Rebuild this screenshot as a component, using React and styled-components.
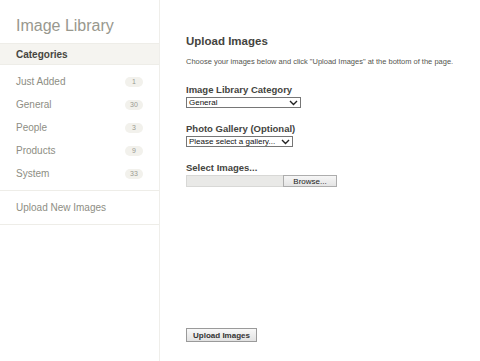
import styled, { createGlobalStyle } from 'styled-components'

const GlobalStyle = createGlobalStyle`
  html, body {
    margin: 0;
    padding: 0;
    background: #fff;
  }
  body {
    font-family: "Liberation Sans", Arial, sans-serif;
  }
`

const categories = [
  { name: 'Just Added', count: 1 },
  { name: 'General', count: 30 },
  { name: 'People', count: 3 },
  { name: 'Products', count: 9 },
  { name: 'System', count: 33 },
]

const Chevron = () => (
  <svg width='9' height='6' viewBox='0 0 9 6'>
    <path d='M1 1 L4.5 4.5 L8 1' fill='none' stroke='#222' strokeWidth='1.4' />
  </svg>
)

const App = () => {
  return (
    <>
      <GlobalStyle />
      <Page>
        <Sidebar>
          <Brand>Image Library</Brand>
          <SectionHead>Categories</SectionHead>
          <CategoryList>
            {categories.map((c) => (
              <CategoryItem key={c.name}>
                <span>{c.name}</span>
                <Badge>{c.count}</Badge>
              </CategoryItem>
            ))}
          </CategoryList>
          <SideLink>Upload New Images</SideLink>
        </Sidebar>
        <Main>
          <Heading>Upload Images</Heading>
          <Intro>
            Choose your images below and click "Upload Images" at the bottom of the page.
          </Intro>
          <Field>
            <Label>Image Library Category</Label>
            <SelectBox $width={115}>
              <span>General</span>
              <Chevron />
            </SelectBox>
          </Field>
          <Field>
            <Label>Photo Gallery (Optional)</Label>
            <SelectBox $width={107}>
              <span>Please select a gallery...</span>
              <Chevron />
            </SelectBox>
          </Field>
          <Field>
            <Label>Select Images...</Label>
            <FileRow>
              <FileName />
              <BrowseButton>Browse...</BrowseButton>
            </FileRow>
          </Field>
          <SubmitButton>Upload Images</SubmitButton>
        </Main>
      </Page>
    </>
  )
}

const Page = styled.div`
  display: flex;
  height: 361px;
  width: 480px;
`

const Sidebar = styled.aside`
  width: 159px;
  flex-shrink: 0;
  border-right: 1px solid #efeeea;
  display: flex;
  flex-direction: column;
`

const Brand = styled.h1`
  margin: 0;
  height: 43px;
  box-sizing: border-box;
  padding: 8px 0 0 16px;
  display: flex;
  align-items: center;
  font-size: 16px;
  font-weight: normal;
  color: #98988e;
`

const SectionHead = styled.div`
  height: 22px;
  display: flex;
  align-items: center;
  padding-left: 16px;
  background: #f5f4f0;
  border-top: 1px solid #eeede8;
  border-bottom: 1px solid #eeede8;
  box-sizing: border-box;
  font-size: 10px;
  font-weight: bold;
  color: #46463f;
`

const CategoryList = styled.ul`
  list-style: none;
  margin: 0;
  padding: 5px 16px 5px 16px;
  border-bottom: 1px solid #eeede8;
`

const CategoryItem = styled.li`
  height: 23px;
  display: flex;
  align-items: center;
  justify-content: space-between;
  font-size: 10px;
  color: #8e8e84;
`

const Badge = styled.span`
  min-width: 18px;
  height: 10px;
  padding: 0 1px;
  box-sizing: border-box;
  border-radius: 5px;
  background: #f2f1ec;
  color: #9a9a92;
  font-size: 7px;
  display: flex;
  align-items: center;
  justify-content: center;
`

const SideLink = styled.div`
  height: 33px;
  display: flex;
  align-items: center;
  padding-left: 16px;
  font-size: 10px;
  color: #8e8e84;
  border-bottom: 1px solid #eeede8;
`

const Main = styled.main`
  flex: 1;
  display: flex;
  flex-direction: column;
  align-items: flex-start;
  padding: 35px 0 19px 26px;
  box-sizing: border-box;
`

const Heading = styled.h2`
  margin: 0;
  font-size: 11.5px;
  font-weight: bold;
  color: #44443e;
`

const Intro = styled.p`
  margin: 10px 0 0;
  font-size: 7.5px;
  color: #55554f;
`

const Field = styled.div`
  display: flex;
  flex-direction: column;
  align-items: flex-start;
  margin-top: 18px;

  & + & {
    margin-top: 15px;
  }
`

const Label = styled.label`
  font-size: 9.5px;
  font-weight: bold;
  color: #44443e;
  margin-bottom: 2px;
`

const SelectBox = styled.div`
  width: ${(p) => p.$width}px;
  height: 11px;
  box-sizing: border-box;
  border: 1px solid #767676;
  background: #fff;
  display: flex;
  align-items: center;
  justify-content: space-between;
  padding: 0 2px 0 2px;
  font-size: 8px;
  color: #111;
`

const FileRow = styled.div`
  display: flex;
  height: 12px;
`

const FileName = styled.div`
  width: 96px;
  background: #e9e9e7;
  border: 1px solid #d8d8d6;
  border-right: none;
`

const BrowseButton = styled.button`
  width: 54px;
  height: 12px;
  padding: 0;
  border: 1px solid #adadad;
  background: linear-gradient(#f6f6f6, #e4e4e4);
  font-family: inherit;
  font-size: 8px;
  color: #222;
`

const SubmitButton = styled.button`
  margin-top: auto;
  width: 71px;
  height: 14px;
  padding: 0;
  border: 1px solid #9a9a9a;
  background: linear-gradient(#f8f8f8, #e2e2e2);
  font-family: inherit;
  font-size: 8px;
  font-weight: bold;
  color: #333;
`

export default App
